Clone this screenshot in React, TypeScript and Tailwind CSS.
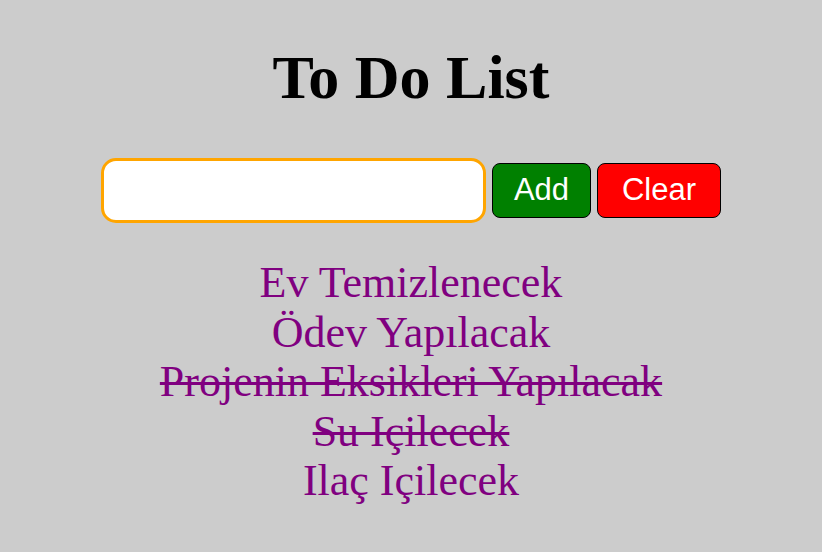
export default function App() {
  const items = [
    { text: "Ev Temizlenecek", done: false },
    { text: "Ödev Yapılacak", done: false },
    { text: "Projenin Eksikleri Yapılacak", done: true },
    { text: "Su Içilecek", done: true },
    { text: "Ilaç Içilecek", done: false },
  ];

  return (
    <div className="min-h-screen bg-[#cccccc] flex flex-col items-center pt-[41px]">
      <h1 className="font-['Liberation_Serif',serif] font-bold text-[62px] leading-[72px] text-black">
        To Do List
      </h1>
      <div className="flex items-center gap-[6px] mt-[45px]">
        <input
          type="text"
          className="w-[385px] h-[65px] bg-white border-[3px] border-[#ffa500] rounded-[15px] outline-none px-3"
        />
        <button className="h-[55px] w-[99px] bg-[#008000] text-white border border-black rounded-[8px] font-['Liberation_Sans',sans-serif] text-[31px]">
          Add
        </button>
        <button className="h-[55px] w-[124px] bg-[#ff0000] text-white border border-black rounded-[8px] font-['Liberation_Sans',sans-serif] text-[31px]">
          Clear
        </button>
      </div>
      <ul className="mt-[35px] flex flex-col items-center font-['Liberation_Serif',serif] text-[44px] leading-[49.5px] text-[#800080]">
        {items.map((it) => (
          <li
            key={it.text}
            className={it.done ? "line-through decoration-[3px]" : ""}
          >
            {it.text}
          </li>
        ))}
      </ul>
    </div>
  );
}
